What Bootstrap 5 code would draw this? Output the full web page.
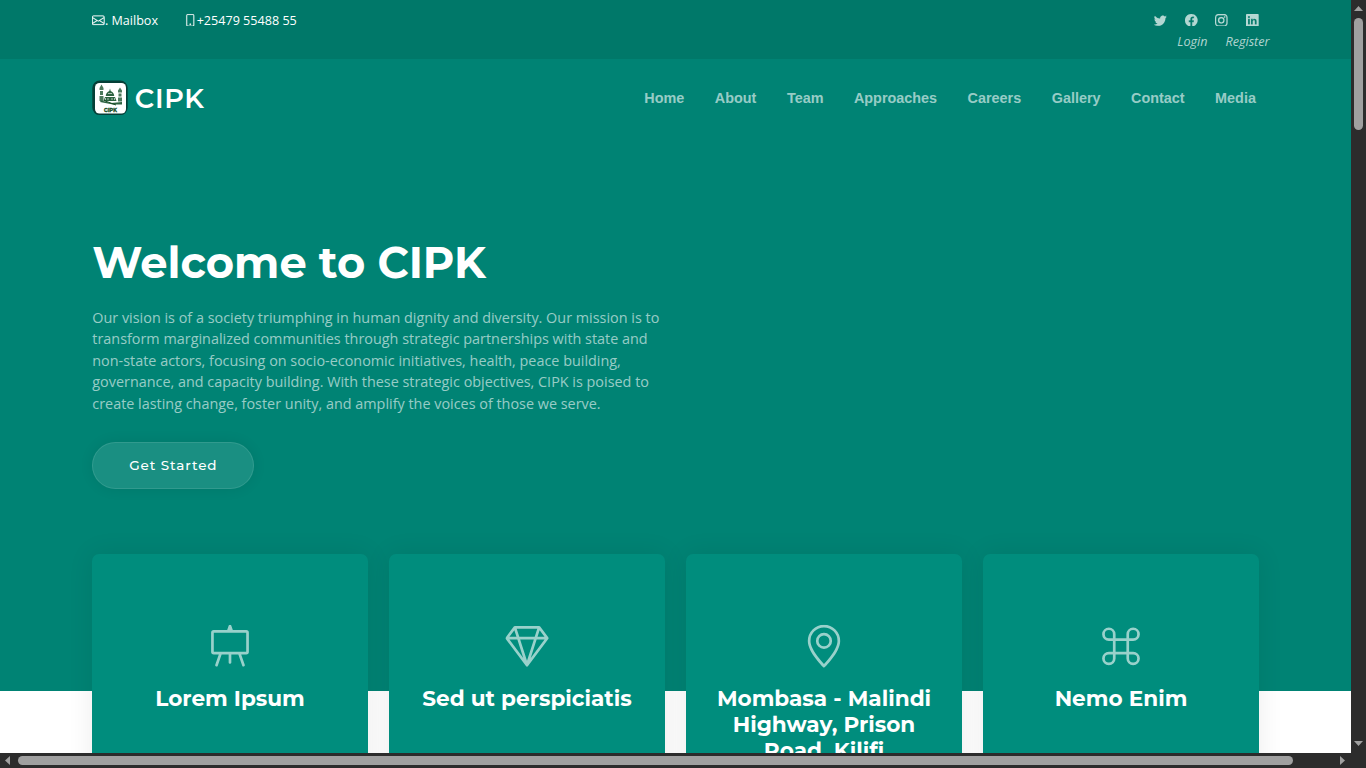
<!DOCTYPE html>
<html lang="en">
<head>
<meta charset="utf-8">
<meta name="viewport" content="width=device-width, initial-scale=1">
<title>CIPK</title>
<link href="https://cdn.jsdelivr.net/npm/bootstrap@5.3.0/dist/css/bootstrap.min.css" rel="stylesheet">
<style>
html{font-size:14.4px}
body{font-family:"Open Sans",sans-serif;color:#fff;background:#2c2c2c;width:1366px;height:768px;overflow:hidden}
a{color:inherit;text-decoration:none}
svg{display:block;fill:currentColor;flex:none}
.screen{display:grid;grid-template:753px 15px/1351px 15px}
.page-view{overflow:hidden;background:#fff}
.container{max-width:1188px}
.heading-font{font-family:Montserrat,"Open Sans",sans-serif}
.topbar{height:59px;background:#007869;font-size:12.6px;line-height:21.6px;padding-top:9.3px}
.topbar svg{stroke:currentColor;stroke-width:.25}
.contact-item{height:21.6px}
.contact-item span{padding-top:1px}
.contact-phone{margin-left:26px}
.soft{color:rgba(255,255,255,.7)}
.social{gap:17.9px;height:21.6px;padding-right:.2px}
.social svg{margin-top:-.5px}
.auth{font-style:italic;gap:18px;margin-right:-10.8px}
.main-header{height:81px;padding-top:21px}
.brand{height:37px;gap:7px;margin-left:-.5px}
.brand svg{margin-top:-.6px}
.brand-name{font-size:27px;font-weight:600;line-height:37px;letter-spacing:.72px;color:#fff}
.main-menu{gap:30.5px;padding-right:2.8px;font:bold 14.4px/37px "Liberation Sans",sans-serif;color:rgba(255,255,255,.6)}
.hero-band{background:#008374;height:691px}
.hero-copy{padding-top:96.8px;width:583px}
.hero-copy h2{font-size:43.2px;font-weight:700;line-height:51.84px;margin:0 0 18px}
.hero-copy p{color:rgba(255,255,255,.6);line-height:21.6px;margin:0 0 27.2px}
.btn-start{font-size:13.5px;font-weight:500;letter-spacing:.9px;line-height:20px;padding:12.2px 36px 11.2px;border:1.5px solid rgba(255,255,255,.1);border-radius:45px;color:#fff;background:rgba(255,255,255,.1);box-shadow:0 0 13.5px rgba(0,0,0,.08);width:162px;height:47px;white-space:nowrap}
.feature-row{margin-top:65px;--bs-gutter-x:21.6px}
.feature{background:#008d7d;height:270px;padding:71.2px 27px 0;border-radius:7px;box-shadow:0 0 27px rgba(0,0,0,.08);text-align:center}
.feature svg{width:43.2px;height:43.2px;margin:0 auto;transform:translate(.4px,-.3px);color:rgba(255,255,255,.6)}
.feature h4{font-size:21.6px;font-weight:700;line-height:25.92px;margin:18px 0 0}
.track{background:#2c2c2c}
.track svg{fill:#a0a0a0}
.thumb{background:#a0a0a0;border-radius:5px;flex:none}
</style>
</head>
<body>
<div class="screen">
<div class="page-view">
 <div class="hero-band">
  <section class="topbar">
   <div class="container d-flex justify-content-between">
    <div class="d-flex">
     <a href="#" class="contact-item d-flex align-items-center"><svg width="12.6" height="12.6" viewBox="0 0 16 16"><path d="M0 4a2 2 0 0 1 2-2h12a2 2 0 0 1 2 2v8a2 2 0 0 1-2 2H2a2 2 0 0 1-2-2zm2-1a1 1 0 0 0-1 1v.217l7 4.2 7-4.2V4a1 1 0 0 0-1-1zm13 2.383-4.708 2.825L15 11.105zm-.034 6.876-5.64-3.471L8 9.583l-1.326-.795-5.64 3.47A1 1 0 0 0 2 13h12a1 1 0 0 0 .966-.741M1 11.105l4.708-2.897L1 5.383z"/></svg><span>. Mailbox</span></a>
     <div class="contact-item contact-phone d-flex align-items-center"><svg width="12.6" height="12.6" viewBox="0 0 16 16"><path d="M11 1a1 1 0 0 1 1 1v12a1 1 0 0 1-1 1H5a1 1 0 0 1-1-1V2a1 1 0 0 1 1-1zM5 0a2 2 0 0 0-2 2v12a2 2 0 0 0 2 2h6a2 2 0 0 0 2-2V2a2 2 0 0 0-2-2z"/><path d="M8 14a1 1 0 1 0 0-2 1 1 0 0 0 0 2"/></svg><span>+25479 55488 55</span></div>
    </div>
    <div class="soft d-flex flex-column align-items-end">
     <div class="social d-flex align-items-center">
      <svg width="12.6" height="12.6" viewBox="0 0 16 16"><path d="M5.026 15c6.038 0 9.341-5.003 9.341-9.334 0-.14 0-.282-.006-.422A6.685 6.685 0 0 0 16 3.542a6.658 6.658 0 0 1-1.889.518 3.301 3.301 0 0 0 1.447-1.817 6.533 6.533 0 0 1-2.087.793A3.286 3.286 0 0 0 7.875 6.03a9.325 9.325 0 0 1-6.767-3.429 3.289 3.289 0 0 0 1.018 4.382A3.323 3.323 0 0 1 .64 6.575v.045a3.288 3.288 0 0 0 2.632 3.218 3.203 3.203 0 0 1-.865.115 3.23 3.23 0 0 1-.614-.057 3.283 3.283 0 0 0 3.067 2.277A6.588 6.588 0 0 1 .78 13.58a6.32 6.32 0 0 1-.78-.045A9.344 9.344 0 0 0 5.026 15z"/></svg>
      <svg width="12.6" height="12.6" viewBox="0 0 16 16"><path d="M16 8.049c0-4.446-3.582-8.05-8-8.05C3.58 0-.002 3.603-.002 8.05c0 4.017 2.926 7.347 6.75 7.951v-5.625h-2.03V8.05H6.75V6.275c0-2.017 1.195-3.131 3.022-3.131.876 0 1.791.157 1.791.157v1.98h-1.009c-.993 0-1.303.621-1.303 1.258v1.51h2.218l-.354 2.326H9.25V16c3.824-.604 6.75-3.934 6.75-7.951z"/></svg>
      <svg width="12.6" height="12.6" viewBox="0 0 16 16"><path d="M8 0C5.829 0 5.556.01 4.703.048 3.85.088 3.269.222 2.76.42a3.917 3.917 0 0 0-1.417.923A3.927 3.927 0 0 0 .42 2.76C.222 3.268.087 3.85.048 4.7.01 5.555 0 5.827 0 8.001c0 2.172.01 2.444.048 3.297.04.852.174 1.433.372 1.942.205.526.478.972.923 1.417.444.445.89.719 1.416.923.51.198 1.09.333 1.942.372C5.555 15.99 5.827 16 8 16s2.444-.01 3.298-.048c.851-.04 1.434-.174 1.943-.372a3.916 3.916 0 0 0 1.416-.923c.445-.445.718-.891.923-1.417.197-.509.332-1.09.372-1.942C15.99 10.445 16 10.173 16 8s-.01-2.445-.048-3.299c-.04-.851-.175-1.433-.372-1.941a3.926 3.926 0 0 0-.923-1.417A3.911 3.911 0 0 0 13.24.42c-.51-.198-1.092-.333-1.943-.372C10.443.01 10.172 0 7.998 0zm-.717 1.442h.718c2.136 0 2.389.007 3.232.046.78.035 1.204.166 1.486.275.373.145.64.319.92.599.28.28.453.546.598.92.11.281.24.705.275 1.485.039.843.047 1.096.047 3.231s-.008 2.389-.047 3.232c-.035.78-.166 1.203-.275 1.485a2.47 2.47 0 0 1-.599.919c-.28.28-.546.453-.92.598-.28.11-.704.24-1.485.276-.843.038-1.096.047-3.232.047s-2.39-.009-3.233-.047c-.78-.036-1.203-.166-1.485-.276a2.478 2.478 0 0 1-.92-.598 2.48 2.48 0 0 1-.6-.92c-.109-.281-.24-.705-.275-1.485-.038-.843-.046-1.096-.046-3.233 0-2.136.008-2.388.046-3.231.036-.78.166-1.204.276-1.486.145-.373.319-.64.599-.92.28-.28.546-.453.92-.598.282-.11.705-.24 1.485-.276.738-.034 1.024-.044 2.515-.045zm4.988 1.328a.96.96 0 1 0 0 1.92.96.96 0 0 0 0-1.92zm-4.27 1.122a4.109 4.109 0 1 0 0 8.217 4.109 4.109 0 0 0 0-8.217zm0 1.441a2.667 2.667 0 1 1 0 5.334 2.667 2.667 0 0 1 0-5.334z"/></svg>
      <svg width="12.6" height="12.6" viewBox="0 0 16 16"><path d="M0 1.146C0 .513.526 0 1.175 0h13.65C15.474 0 16 .513 16 1.146v13.708c0 .633-.526 1.146-1.175 1.146H1.175C.526 16 0 15.487 0 14.854zm4.943 12.248V6.169H2.542v7.225zm-1.2-8.212c.837 0 1.358-.554 1.358-1.248-.015-.709-.52-1.248-1.342-1.248S2.4 3.226 2.4 3.934c0 .694.521 1.248 1.327 1.248zm4.908 8.212V9.359c0-.216.016-.432.08-.586.173-.431.568-.878 1.232-.878.869 0 1.216.662 1.216 1.634v3.865h2.401V9.25c0-2.22-1.184-3.252-2.764-3.252-1.274 0-1.845.7-2.165 1.193v.025h-.016l.016-.025V6.169h-2.4c.03.678 0 7.225 0 7.225z"/></svg>
     </div>
     <div class="auth d-flex"><a href="#">Login</a><a href="#">Register</a></div>
    </div>
   </div>
  </section>
  <header class="main-header">
   <div class="container d-flex justify-content-between">
    <a href="#" class="brand d-flex align-items-center">
     <svg width="36" height="36" viewBox="0 0 36 36"><rect x=".3" y=".5" width="35.4" height="34.6" rx="7.500" fill="#053f37"/><rect x="3" y="3" width="31" height="30.500" rx="4.500" fill="#fff"/>
      <g fill="#2d6240"><path d="M9.500 4.500l2 3.500v2h-4V8zM8 11h3v4H8zM7.500 16h4v5h-4zM28 7.500l2 3v2h-4v-2zM26.500 13.500h3v3h-3zM26 17.500h4v4h-4z" opacity=".85"/><path d="M18 8.500l.7 2.500c2.500 1 3.500 3 3.500 5h-8.400c0-2 1-4 3.500-5zM13 17h10l1.500 4h-13zM9 20.500l10 2.500 11-1v2.500h-9L8 22z"/></g>
      <path d="M13.500 18v2m2.500-2v2m4-2v2m2.500-2v2M16 13.500h4" stroke="#fff" stroke-width=".6" fill="none"/><path d="M12 20.500l12 4.500" stroke="#174d24" stroke-width="1"/>
      <text x="12" y="31.500" font-family="Liberation Sans" font-weight="700" font-size="5.200" textLength="13" fill="#174d24" stroke="#174d24" stroke-width=".4">CIPK</text></svg>
     <span class="brand-name heading-font">CIPK</span>
    </a>
    <nav class="main-menu d-flex"><a href="#">Home</a><a href="#">About</a><a href="#">Team</a><a href="#">Approaches</a><a href="#">Careers</a><a href="#">Gallery</a><a href="#">Contact</a><a href="#">Media</a></nav>
   </div>
  </header>
  <main class="container">
   <div class="hero-copy">
    <h2 class="heading-font">Welcome to CIPK</h2>
    <p>Our vision is of a society triumphing in human dignity and diversity. Our mission is to transform marginalized communities through strategic partnerships with state and non-state actors, focusing on socio-economic initiatives, health, peace building, governance, and capacity building. With these strategic objectives, CIPK is poised to create lasting change, foster unity, and amplify the voices of those we serve.</p>
    <a href="#" class="btn btn-start heading-font">Get Started</a>
   </div>
   <div class="row feature-row">
    <div class="col-3"><div class="feature"><svg viewBox="0 0 16 16"><path d="M8 0a.5.5 0 0 1 .473.337L9.046 2H14a1 1 0 0 1 1 1v7a1 1 0 0 1-1 1h-1.85l1.323 3.837a.5.5 0 1 1-.946.326L11.092 11H8.5v3a.5.5 0 0 1-1 0v-3H4.908l-1.435 4.163a.5.5 0 1 1-.946-.326L3.85 11H2a1 1 0 0 1-1-1V3a1 1 0 0 1 1-1h4.954L7.527.337A.5.5 0 0 1 8 0zM2 3v7h12V3H2z"/></svg><h4 class="heading-font">Lorem Ipsum</h4></div></div>
    <div class="col-3"><div class="feature"><svg viewBox="0 0 16 16"><path d="M3.1.7a.5.5 0 0 1 .4-.2h9a.5.5 0 0 1 .4.2l2.976 3.974c.149.185.156.45.01.644L8.4 15.3a.5.5 0 0 1-.8 0L.1 5.3a.5.5 0 0 1 0-.6zm11.386 3.785-1.806-2.41-.776 2.413zm-3.633.004.961-2.989H4.186l.963 2.995zM5.47 5.495 8 13.366l2.532-7.876zm-1.371-.999-.78-2.422-1.818 2.425zM1.499 5.5l5.113 6.817-2.192-6.82zm7.889 6.817 5.123-6.83-2.928.002z"/></svg><h4 class="heading-font">Sed ut perspiciatis</h4></div></div>
    <div class="col-3"><div class="feature"><svg viewBox="0 0 16 16"><path d="M12.166 8.94c-.524 1.062-1.234 2.12-1.96 3.07A31.493 31.493 0 0 1 8 14.58a31.481 31.481 0 0 1-2.206-2.57c-.726-.95-1.436-2.008-1.96-3.07C3.304 7.867 3 6.862 3 6a5 5 0 0 1 10 0c0 .862-.305 1.867-.834 2.94zM8 16s6-5.686 6-10A6 6 0 0 0 2 6c0 4.314 6 10 6 10z"/><path d="M8 8a2 2 0 1 1 0-4 2 2 0 0 1 0 4zm0 1a3 3 0 1 0 0-6 3 3 0 0 0 0 6z"/></svg><h4 class="heading-font">Mombasa - Malindi<br>Highway, Prison<br>Road, Kilifi</h4></div></div>
    <div class="col-3"><div class="feature"><svg viewBox="0 0 16 16"><path d="M3.5 2A1.5 1.5 0 0 1 5 3.5V5H3.5a1.5 1.5 0 1 1 0-3zM6 5V3.5A2.5 2.5 0 1 0 3.5 6H5v4H3.5A2.5 2.5 0 1 0 6 12.5V11h4v1.5a2.5 2.5 0 1 0 2.5-2.5H11V6h1.5A2.5 2.5 0 1 0 10 3.5V5H6zm4 1v4H6V6h4zm1-1V3.5A1.5 1.5 0 1 1 12.5 5H11zm0 6h1.5a1.5 1.5 0 1 1-1.5 1.5V11zm-6 0v1.5A1.5 1.5 0 1 1 3.5 11H5z"/></svg><h4 class="heading-font">Nemo Enim</h4></div></div>
   </div>
  </main>
 </div>
</div>
<div class="track d-flex flex-column align-items-center justify-content-between">
 <div><svg width="9" height="18" viewBox="0 0 9 18"><path d="M0 11l4.500-5L9 11z"/></svg><div class="thumb" style="width:9px;height:112px"></div></div>
 <svg width="9" height="13" viewBox="0 0 9 13"><path d="M0 1h9L4.500 6z"/></svg>
</div>
<div class="track d-flex align-items-center justify-content-between">
 <svg width="18" height="9" viewBox="0 0 18 9"><path d="M10 0v9L5 4.500z"/></svg><div class="thumb" style="width:1275px;height:9px"></div><svg width="58" height="9" viewBox="0 0 58 9"><path d="M47 0v9l5-4.500z"/></svg>
</div>
<div class="track"></div>
</div>
<script src="https://cdn.jsdelivr.net/npm/bootstrap@5.3.0/dist/js/bootstrap.bundle.min.js"></script>
</body>
</html>
